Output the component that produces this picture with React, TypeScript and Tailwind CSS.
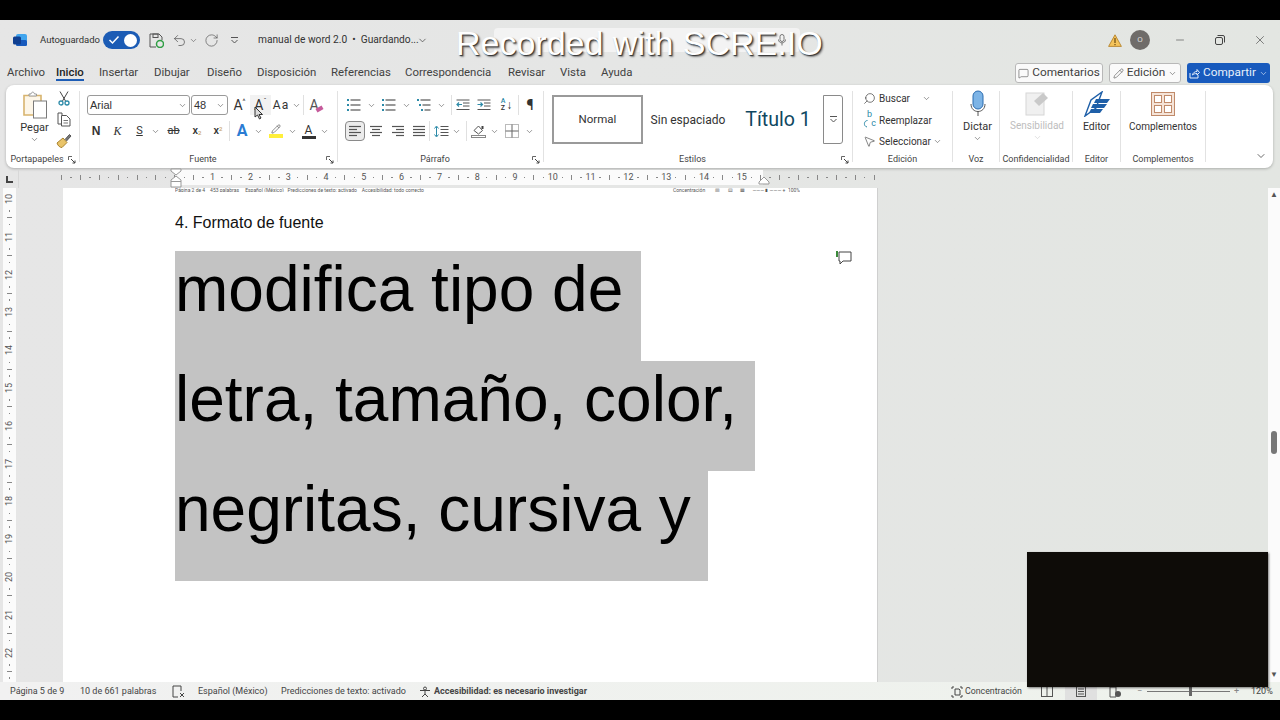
import React from "react";
import { ChevronDown, Undo2, RotateCw, Search, Minus, X, MessageSquare, Pencil, MousePointer2 } from "lucide-react";

const V = ({ c = "text-[#555]", s = 9 }: { c?: string; s?: number }) => <ChevronDown size={s} strokeWidth={1.6} className={`${c} shrink-0`} />;
const TEAL = "#2c8aa8";

function ListIcon({ kind }: { kind: number }) {
  return (
    <svg width="15" height="14" viewBox="0 0 15 14" fill="none">
      {[2, 7, 12].map((y, i) => {
        const x = kind === 2 ? 1 + (i === 1 ? 2 : i === 2 ? 4 : 0) : 1;
        return (
          <g key={y}>
            <rect x={x} y={y - 1} width="2" height="2" fill={TEAL} />
            <line x1={x + 3.5} x2="14.5" y1={y} y2={y} stroke="#555" strokeWidth="1.2" />
          </g>
        );
      })}
    </svg>
  );
}

function Lines({ mode }: { mode: "l" | "c" | "r" | "j" }) {
  const rows = mode === "j" ? [[1, 13], [1, 13], [1, 13], [1, 13]] : mode === "l" ? [[1, 13], [1, 9], [1, 13], [1, 9]] : mode === "c" ? [[1, 13], [3, 11], [1, 13], [3, 11]] : [[1, 13], [5, 13], [1, 13], [5, 13]];
  return (
    <svg width="14" height="12" viewBox="0 0 14 12" fill="none">
      {rows.map((r, i) => <line key={i} x1={r[0]} x2={r[1]} y1={1.5 + i * 3} y2={1.5 + i * 3} stroke="#555" strokeWidth="1.2" />)}
    </svg>
  );
}

function Indent({ inc }: { inc?: boolean }) {
  return (
    <svg width="14" height="12" viewBox="0 0 14 12" fill="none">
      <path d="M0.5 1H13.5M7 4H13.5M7 7H13.5M0.5 10.5H13.5" stroke="#555" />
      {inc ? <path d="M0.5 5.5H5M3.5 3.5L5.5 5.5L3.5 7.5" stroke={TEAL} strokeWidth="1.2" /> : <path d="M6 5.5H1.5M3 3.5L1 5.5L3 7.5" stroke={TEAL} strokeWidth="1.2" />}
    </svg>
  );
}

function Launcher() {
  return (
    <svg width="8" height="8" viewBox="0 0 8 8" fill="none" className="shrink-0">
      <path d="M0.5 4V0.5H4" stroke="#666" />
      <path d="M3 3L7 7M7 4.5V7H4.5" stroke="#444" />
    </svg>
  );
}

function Group({ w, label, children, launcher, sep = true }: { w: string; label: string; children: React.ReactNode; launcher?: boolean; sep?: boolean }) {
  return (
    <div className={`${w} shrink-0 h-full flex`}>
      <div className="flex-1 min-w-0 flex flex-col">
        <div className="flex-1 min-h-0">{children}</div>
        <div className="h-[17px] pt-[1px] flex items-center text-[9px] text-[#444] whitespace-nowrap">
          <span className="flex-1 text-center">{label}</span>
          {launcher && <span className="mr-[3px]"><Launcher /></span>}
        </div>
      </div>
      {sep && <div className="w-px bg-[#e2e2e2] my-[6px]" />}
    </div>
  );
}

const Btn = ({ w, children }: { w: string; children: React.ReactNode }) => (
  <div className={`${w} h-[20px] shrink-0 flex items-center justify-center gap-[3px] text-[#333]`}>{children}</div>
);
const Sep = () => <div className="w-px h-[20px] bg-[#e0e0e0] shrink-0" />;

function RulerCell({ n, tick }: { n?: number; tick?: boolean }) {
  return (
    <div className="w-[37.8px] shrink-0 grid grid-cols-4 text-[9px] leading-none text-[#555]">
      <span className="flex items-center justify-center"><i className="w-[1.5px] h-[1.5px] bg-[#888]" /></span>
      <span className="flex items-center justify-center"><i className="w-px h-[5px] bg-[#888]" /></span>
      <span className="flex items-center justify-center"><i className="w-[1.5px] h-[1.5px] bg-[#888]" /></span>
      <span className="flex items-center justify-center">{tick ? <i className="w-px h-[5px] bg-[#888]" /> : n}</span>
    </div>
  );
}

function VRulerCell({ n }: { n: number }) {
  return (
    <div className="h-[37.8px] w-full shrink-0 flex flex-col items-center justify-between text-[9px] leading-none text-[#555]">
      <span className="[writing-mode:vertical-rl] rotate-180 h-[12px] flex items-center justify-center">{n}</span>
      <i className="w-[1.5px] h-[1.5px] bg-[#888]" />
      <i className="w-[5px] h-px bg-[#888]" />
      <i className="w-[1.5px] h-[1.5px] bg-[#888]" />
      <i className="h-0" />
    </div>
  );
}

export default function App() {
  return (
    <div className="relative w-[1280px] h-[720px] overflow-hidden bg-black font-['Roboto',sans-serif] flex flex-col">
      <div className="h-5 shrink-0 bg-black" />
      <div className="h-[680px] shrink-0 flex flex-col bg-gradient-to-r from-[#e6e6e6] via-[#e5e6e5] to-[#e3e6e2]">
        {/* Title bar */}
        <div className="h-[40px] shrink-0 flex items-center text-[#333]">
          <svg width="14" height="14" viewBox="0 0 14 14" className="ml-[13px] shrink-0">
            <rect x="3" y="1" width="11" height="12" rx="2" fill="#41a5ee" />
            <rect x="3" y="7" width="11" height="6" rx="1.5" fill="#185abd" />
            <rect x="0" y="3.5" width="8" height="8" rx="1.5" fill="#103f91" />
          </svg>
          <span className="ml-[13px] text-[9.5px] w-[57px] whitespace-nowrap">Autoguardado</span>
          <div className="ml-[6px] w-[37px] h-[18px] rounded-full bg-[#1c5cb5] flex items-center justify-between px-[3px] shrink-0">
            <svg width="12" height="10" viewBox="0 0 12 10" fill="none" className="ml-[2px]"><path d="M1.5 5L4.5 8L10.5 1.5" stroke="#fff" strokeWidth="1.5" /></svg>
            <span className="w-[13px] h-[13px] rounded-full bg-white" />
          </div>
          <svg width="15" height="15" viewBox="0 0 15 15" fill="none" className="ml-[9px] shrink-0">
            <path d="M1 1H10L13 4V7M7 14H1V1" stroke="#555" />
            <rect x="4" y="1" width="5" height="3.5" stroke="#555" />
            <circle cx="11" cy="11" r="3.5" stroke="#2f9e44" strokeWidth="1.5" />
          </svg>
          <Undo2 size={15} strokeWidth={1.2} className="ml-[8px] text-[#555] shrink-0" />
          <span className="ml-[2px]"><V /></span>
          <RotateCw size={15} strokeWidth={1.1} className="ml-[6px] text-[#555] shrink-0" />
          <svg width="9" height="9" viewBox="0 0 9 9" fill="none" className="ml-[11px] shrink-0"><path d="M1 1.5H8M1.5 4L4.5 7L7.5 4" stroke="#555" /></svg>
          <span className="ml-[19px] w-[156px] text-[10.2px] whitespace-nowrap">manual de word 2.0 &nbsp;•&nbsp; Guardando...</span>
          <span className="ml-[3px]"><V s={11} c="text-[#444]" /></span>
          <div className="ml-[66px] w-[306px] h-[24px] rounded bg-[#f3f3f3] flex items-center justify-end pr-[14px] shrink-0">
            <svg width="8" height="12" viewBox="0 0 8 12" fill="none"><rect x="2" y="0.5" width="4" height="7" rx="2" stroke="#777" /><path d="M0.5 5.5C0.5 10 7.5 10 7.5 5.5M4 9V11.5" stroke="#777" /></svg>
          </div>
          <svg width="14" height="13" viewBox="0 0 14 13" className="ml-[308px] shrink-0">
            <path d="M7 0.8L13.4 12.4H0.6Z" fill="#f4c35a" stroke="#b07a1e" strokeWidth="0.8" />
            <rect x="6.4" y="4" width="1.2" height="5" fill="#6b4a10" /><rect x="6.4" y="10" width="1.2" height="1.2" fill="#6b4a10" />
          </svg>
          <div className="ml-[8px] w-[20px] h-[20px] rounded-full bg-[#6f6c69] flex items-center justify-center text-[8px] text-[#ddd] shrink-0">O</div>
          <Minus size={12} strokeWidth={1.2} className="ml-[24px] text-[#444] shrink-0" />
          <svg width="10" height="10" viewBox="0 0 10 10" fill="none" className="ml-[29px] shrink-0"><rect x="0.5" y="2.5" width="7" height="7" rx="1.5" stroke="#444" /><path d="M2.5 0.5H8A1.5 1.5 0 0 1 9.5 2V7.5" stroke="#444" /></svg>
          <X size={14} strokeWidth={1.1} className="ml-[28px] text-[#444] shrink-0" />
        </div>
        {/* Tabs */}
        <div className="h-[25px] shrink-0 flex items-center text-[11.4px] text-[#424242] pl-[7px] pt-[1px] whitespace-nowrap">
          <span className="w-[49px]">Archivo</span>
          <span className="w-[43px] h-full relative flex items-center font-medium text-[#222]">
            Inicio<i className="absolute left-0 bottom-[4px] w-[28px] h-[2px] bg-[#1c5cb5]" />
          </span>
          <span className="w-[55px]">Insertar</span>
          <span className="w-[53px]">Dibujar</span>
          <span className="w-[50px]">Diseño</span>
          <span className="w-[74px]">Disposición</span>
          <span className="w-[74px]">Referencias</span>
          <span className="w-[103px]">Correspondencia</span>
          <span className="w-[52px]">Revisar</span>
          <span className="w-[41px]">Vista</span>
          <span className="w-[414px]">Ayuda</span>
          <div className="w-[88px] h-[20px] rounded-[3px] border border-[#b8b8b8] bg-[#fafafa] flex items-center justify-center gap-[3px] shrink-0 text-[11.8px]">
            <MessageSquare size={11} strokeWidth={1.2} /><span>Comentarios</span>
          </div>
          <div className="ml-[6px] w-[72px] h-[20px] rounded-[3px] border border-[#b8b8b8] bg-[#fafafa] flex items-center justify-center gap-[3px] shrink-0 text-[11.8px]">
            <Pencil size={11} strokeWidth={1.2} /><span>Edición</span><V />
          </div>
          <div className="ml-[6px] w-[83px] h-[20px] rounded-[3px] bg-[#185abd] text-[#e8f0fb] flex items-center justify-center gap-[3px] shrink-0 text-[11.8px]">
            <svg width="11" height="11" viewBox="0 0 11 11" fill="none"><path d="M1 5V10H9V7M3.5 7C4 4.5 6 3.5 8 3.5V1.5L10.5 4.5L8 7V5.5C6 5.5 4.5 6 3.5 7Z" stroke="#e8f0fb" /></svg>
            <span>Compartir</span><V c="text-[#e8f0fb]" />
          </div>
        </div>
        {/* Ribbon */}
        <div className="h-[83px] shrink-0 ml-[6px] mr-[7px] bg-white rounded-lg shadow-[0_1px_3px_rgba(0,0,0,0.25)] flex text-[#333]">
          <Group w="w-[74px]" label="Portapapeles" launcher>
            <div className="flex pl-[15px] pt-[6px]">
              <div className="w-[27px] flex flex-col items-center">
                <svg width="26" height="28" viewBox="0 0 26 28" fill="none">
                  <path d="M2 4.5H19V24H2Z" fill="#fdf6e8" stroke="#d8b46e" strokeWidth="1.6" />
                  <path d="M7 5V3H9C9.5 0.5 12 0.5 12.5 3H14.5V5Z" fill="#fff" stroke="#999" />
                  <rect x="11.5" y="10" width="13" height="17" fill="#fff" stroke="#7a7a7a" />
                </svg>
                <span className="text-[11px] mt-[2px] leading-[14px]">Pegar</span>
                <V />
              </div>
              <div className="ml-[8px] flex flex-col items-center gap-[6px]">
                <svg width="12" height="15" viewBox="0 0 12 15" fill="none">
                  <path d="M2 0.5L7.5 10M10 0.5L4.5 10" stroke="#444" />
                  <circle cx="3" cy="12" r="2" stroke={TEAL} strokeWidth="1.3" /><circle cx="9" cy="12" r="2" stroke={TEAL} strokeWidth="1.3" />
                </svg>
                <svg width="14" height="15" viewBox="0 0 14 15" fill="none">
                  <path d="M5 3V1H1V12H4" stroke="#555" />
                  <path d="M4.5 3.5H9.5L13 7V14H4.5Z" fill="#fff" stroke="#555" />
                  <path d="M6.5 8.5H11M6.5 11H11" stroke="#777" />
                </svg>
                <svg width="16" height="15" viewBox="0 0 16 15" fill="none">
                  <path d="M1 10L7 5L11 9.5L6 14.5C4 14.5 2 13 1 10Z" fill="#e9c46a" stroke="#a9822c" />
                  <path d="M9 6.5L13.5 1.5L15 3L10.5 8" fill="#777" stroke="#555" />
                </svg>
              </div>
            </div>
          </Group>
          <Group w="w-[258px]" label="Fuente" launcher>
            <div className="pl-[7px] pt-[10px] flex items-center">
              <div className="w-[103px] h-[20px] rounded-[3px] border border-[#9a9a9a] flex items-center justify-between px-[2px] text-[11px] font-['Liberation_Sans',sans-serif]">Arial<V /></div>
              <div className="ml-[1px] w-[37px] h-[20px] rounded-[3px] border border-[#9a9a9a] flex items-center justify-between px-[2px] text-[11px] font-['Liberation_Sans',sans-serif]">48<V /></div>
              <Btn w="w-[21px] ml-[1px]"><span className="text-[14px]">A</span><span className="text-[7px] -ml-[3px] -mt-[6px]">^</span></Btn>
              <Btn w="w-[21px] bg-[#f2f2f2]"><span className="text-[14px]">A</span><span className="text-[7px] -ml-[3px] -mt-[6px]">ˇ</span></Btn>
              <Btn w="w-[32px]"><span className="text-[12px] tracking-[1px]">Aa</span><V /></Btn>
              <Sep />
              <Btn w="w-[24px]">
                <span className="text-[14px] text-[#555]">A</span><i className="w-[7px] h-[4px] -ml-[6px] mt-[8px] rotate-[-30deg] bg-[#c55a9b]" />
              </Btn>
            </div>
            <div className="pl-[5px] pt-[6px] flex items-center text-[11px]">
              <Btn w="w-[22px]"><b className="text-[12px] font-['Liberation_Sans',sans-serif]">N</b></Btn>
              <Btn w="w-[21px]"><i className="font-['Liberation_Serif',serif] text-[12px]">K</i></Btn>
              <Btn w="w-[23px]"><u className="text-[11px]">S</u></Btn>
              <V />
              <Btn w="w-[27px]"><s className="text-[11px]">ab</s></Btn>
              <Btn w="w-[20px]"><span className="font-medium">x<sub className="text-[6px] text-[#c9a468]">2</sub></span></Btn>
              <Btn w="w-[22px]"><span className="font-medium">x<sup className="text-[6px] text-[#c9a468]">2</sup></span></Btn>
              <Sep />
              <Btn w="w-[24px]"><span className="text-[16px] font-bold text-[#2b7cd3] leading-none">A</span></Btn>
              <V />
              <Btn w="w-[25px]">
                <span className="flex flex-col items-center leading-none"><Pencil size={10} strokeWidth={1.3} /><i className="w-[14px] h-[4px] bg-[#ffef3a]" /></span>
              </Btn>
              <V />
              <Btn w="w-[23px]">
                <span className="flex flex-col items-center leading-none text-[12px]">A<i className="w-[14px] h-[3px] bg-[#333]" /></span>
              </Btn>
              <V />
            </div>
          </Group>
          <Group w="w-[206px]" label="Párrafo" launcher>
            <div className="pl-[8px] pt-[10px] flex items-center">
              <Btn w="w-[15px]"><ListIcon kind={0} /></Btn><span className="mx-[5.5px]"><V /></span>
              <Btn w="w-[15px]"><ListIcon kind={1} /></Btn><span className="mx-[5.5px]"><V /></span>
              <Btn w="w-[15px]"><ListIcon kind={2} /></Btn><span className="mx-[5.5px]"><V /></span>
              <Sep />
              <Btn w="w-[21px]"><Indent /></Btn>
              <Btn w="w-[22px]"><Indent inc /></Btn>
              <Btn w="w-[23px]">
                <span className="flex flex-col text-[7px] leading-[7px] font-medium"><span className="text-[#2c8aa8]">A</span><span>Z</span></span>
                <span className="text-[12px] -ml-[2px]">↓</span>
              </Btn>
              <Sep />
              <Btn w="w-[22px]"><span className="text-[14px] font-bold">¶</span></Btn>
            </div>
            <div className="pl-[7px] pt-[6px] flex items-center">
              <div className="w-[20px] h-[20px] rounded-[4px] border border-[#8a8a8a] bg-[#ececec] flex items-center justify-center shrink-0"><Lines mode="l" /></div>
              <Btn w="w-[22px]"><Lines mode="c" /></Btn>
              <Btn w="w-[21px]"><Lines mode="r" /></Btn>
              <Btn w="w-[21px]"><Lines mode="j" /></Btn>
              <Sep />
              <Btn w="w-[22px]">
                <svg width="15" height="13" viewBox="0 0 15 13" fill="none">
                  <path d="M2.5 2V11M0.5 3.5L2.5 1L4.5 3.5M0.5 9.5L2.5 12L4.5 9.5" stroke={TEAL} />
                  <path d="M6.5 1.5H14.5M6.5 4.5H14.5M6.5 7.5H14.5M6.5 10.5H14.5" stroke="#555" />
                </svg>
              </Btn>
              <V />
              <span className="ml-[5px]"><Sep /></span>
              <Btn w="w-[23px]">
                <svg width="15" height="14" viewBox="0 0 15 14" fill="none">
                  <path d="M3 6.5L7.5 2L11.5 6.5L7.5 10Z" stroke="#555" fill="#fff" />
                  <path d="M11.5 2V5" stroke="#444" strokeWidth="2" />
                  <rect x="0.5" y="11.5" width="14" height="2" fill="#fff" stroke="#888" />
                </svg>
              </Btn>
              <V />
              <Btn w="w-[26px]">
                <svg width="14" height="14" viewBox="0 0 14 14" fill="none"><rect x="0.5" y="0.5" width="13" height="13" stroke="#bbb" /><path d="M7 0.5V13.5M0.5 7H13.5" stroke="#666" /></svg>
              </Btn>
              <V />
            </div>
          </Group>
          <Group w="w-[309px]" label="Estilos" launcher>
            <div className="ml-[8px] mt-[10px] w-[291px] h-[49px] flex items-stretch">
              <div className="w-[91px] border-2 border-[#9a9a9a] flex items-center justify-center text-[11.5px]">Normal</div>
              <div className="w-[90px] flex items-center justify-center text-[12px] whitespace-nowrap">Sin espaciado</div>
              <div className="w-[90px] flex items-center justify-center text-[19.6px] text-[#0f4761] whitespace-nowrap">Título 1</div>
              <div className="w-[20px] rounded-r-[3px] border border-[#8a8a8a] flex items-center justify-center">
                <svg width="9" height="9" viewBox="0 0 9 9" fill="none"><path d="M1 1.5H8M1.5 4L4.5 7L7.5 4" stroke="#555" /></svg>
              </div>
            </div>
          </Group>
          <Group w="w-[100px]" label="Edición">
            <div className="pt-[3px] pl-[10px] flex flex-col text-[10px]">
              <div className="h-[21px] flex items-center gap-[2px]"><Search size={13} strokeWidth={1.2} className="-scale-x-100 shrink-0" /><span className="w-[41px] ml-[1px]">Buscar</span><V /></div>
              <div className="h-[22px] flex items-center gap-[2px]">
                <span className="w-[14px] h-[16px] flex items-end text-[9px] leading-none text-[#2c8aa8]">
                  <svg width="5" height="8" viewBox="0 0 5 8" fill="none" className="shrink-0"><path d="M4.5 0.5C1 0.5 0 6 4 7" stroke="#2c8aa8" /></svg>
                  <span className="flex flex-col items-end -ml-[1px]"><span className="mr-[4px]">b</span><span>c</span></span>
                </span>
                <span>Reemplazar</span>
              </div>
              <div className="h-[21px] flex items-center gap-[2px]"><MousePointer2 size={13} strokeWidth={1.1} className="shrink-0 mr-[1px]" /><span>Seleccionar</span><V /></div>
            </div>
          </Group>
          <Group w="w-[47px]" label="Voz">
            <div className="pt-[5px] pl-[3px] flex flex-col items-center">
              <svg width="16" height="27" viewBox="0 0 16 27" fill="none">
                <rect x="3" y="1" width="10" height="18" rx="5" fill="#7db4e6" stroke="#2b6cb0" />
                <path d="M1 14C1 24 15 24 15 14M8 22V26" stroke="#555" />
              </svg>
              <span className="text-[11px] leading-[14px] mt-[3px]">Dictar</span>
              <V />
            </div>
          </Group>
          <Group w="w-[73px]" label="Confidencialidad">
            <div className="pt-[6px] pl-[2px] flex flex-col items-center">
              <svg width="24" height="25" viewBox="0 0 24 25" fill="none">
                <rect x="1" y="2" width="18" height="22" fill="#f0f0f0" stroke="#d6d6d6" />
                <path d="M9 10L18 2L23 7L14 15Z" fill="#c9c9c9" />
              </svg>
              <span className="text-[10px] leading-[14px] mt-[3px] text-[#bdbdbd]">Sensibilidad</span>
              <V c="text-[#ccc]" />
            </div>
          </Group>
          <Group w="w-[48px]" label="Editor">
            <div className="pt-[6px] flex flex-col items-center">
              <svg width="28" height="26" viewBox="0 0 28 26" fill="none">
                <path d="M2 25L8 9L19 1L13 17Z" fill="#fff" stroke="#1e5fa8" strokeWidth="1.4" />
                <path d="M13 8H27L24 12H11ZM10 13H24L21 17H8ZM8 18H20L17 22H6Z" fill="#1e5fa8" />
              </svg>
              <span className="text-[10.5px] leading-[14px] mt-[3px]">Editor</span>
            </div>
          </Group>
          <Group w="w-[85px]" label="Complementos">
            <div className="pt-[7px] flex flex-col items-center">
              <div className="w-[24px] h-[24px] border border-[#c08a6a] bg-[#f5e4d8] grid grid-cols-2 gap-[2px] p-[2px]">
                <i className="border border-[#c08a6a] bg-white" /><i className="border border-[#c08a6a] bg-white" />
                <i className="border border-[#c08a6a] bg-white" /><i className="border border-[#c08a6a] bg-white" />
              </div>
              <span className="text-[10px] leading-[14px] mt-[4px]">Complementos</span>
            </div>
          </Group>
          <div className="flex-1 flex items-end justify-end pr-[6px] pb-[6px]"><V s={12} c="text-[#444]" /></div>
        </div>
        {/* Ruler */}
        <div className="h-[20px] shrink-0 pt-[2px] flex relative">
          <div className="w-[19px] shrink-0 flex items-center justify-center border-r border-[#d8d8d8]">
            <svg width="7" height="7" viewBox="0 0 7 7"><path d="M1 0V6H7" stroke="#444" strokeWidth="2" fill="none" /></svg>
          </div>
          <div className="w-[47.2px] shrink-0 h-[15px] flex items-center justify-end pr-[4.6px]"><i className="w-px h-[5px] bg-[#888]" /></div>
          <div className="h-[15px] flex">
            <div className="w-[108.8px] overflow-hidden flex shrink-0">
              <RulerCell tick /><RulerCell tick /><RulerCell tick />
            </div>
            <div className="w-[588px] shrink-0 overflow-hidden bg-[#fbfbfb] flex pl-[4.6px]">
              {Array.from({ length: 15 }, (_, i) => <RulerCell key={i} n={i + 1} />)}
              <RulerCell tick />
            </div>
            <div className="w-[112px] shrink-0 overflow-hidden flex">
              <div className="flex shrink-0 -ml-[16.4px]"><RulerCell tick /><RulerCell tick /><RulerCell tick /><RulerCell tick /></div>
            </div>
          </div>
          <svg width="12" height="20" viewBox="0 0 12 20" fill="none" className="absolute left-[170px] top-0">
            <path d="M1 1H11V3L6 7L1 3Z" fill="#fff" stroke="#999" />
            <path d="M6 8L11 12V19H1V12Z" fill="#fff" stroke="#999" />
            <path d="M1 13.5H11" stroke="#999" />
          </svg>
          <svg width="12" height="9" viewBox="0 0 12 9" fill="none" className="absolute left-[758px] top-[8px]">
            <path d="M6 1L11 6V8H1V6Z" fill="#fff" stroke="#999" />
          </svg>
        </div>
        {/* Body */}
        <div className="flex-1 min-h-0 flex">
          <div className="w-[13px] shrink-0 ml-[3px] bg-[#fbfbfb] overflow-hidden flex flex-col pt-[5px]">
            {Array.from({ length: 13 }, (_, i) => <VRulerCell key={i} n={i + 10} />)}
          </div>
          <div className="w-[47px] shrink-0" />
          <div className="w-[815px] shrink-0 bg-white border-r border-[#cfcfcf] relative overflow-hidden pl-[112px]">
            <div className="h-[4px] w-[625px] overflow-hidden flex justify-between text-[5px] leading-[4px] text-[#555] whitespace-nowrap">
              <span>Página 2 de 4 &nbsp;&nbsp; 453 palabras &nbsp;&nbsp;&nbsp; Español (México) &nbsp; Predicciones de texto: activado &nbsp;&nbsp; Accesibilidad: todo correcto</span>
              <span>Concentración &nbsp;&nbsp;&nbsp;&nbsp;&nbsp;&nbsp; ▥ &nbsp;&nbsp;&nbsp;&nbsp; ▤ &nbsp;&nbsp;&nbsp;&nbsp; ▦ &nbsp;&nbsp;&nbsp;&nbsp; ——— ▮ ——— + &nbsp;100%</span>
            </div>
            <div className="h-[21px] mt-[20px] text-[16px] leading-[21px] text-[#111] font-['Liberation_Sans',sans-serif]">4. Formato de fuente</div>
            <div className="mt-[18px] font-['Liberation_Sans',sans-serif] text-[64px] leading-[76px] text-black whitespace-nowrap">
              <div className="w-[466px] h-[110px] bg-[#c3c3c3]">modifica tipo de</div>
              <div className="w-[580px] h-[110px] bg-[#c3c3c3]">letra, tamaño, color,</div>
              <div className="w-[533px] h-[110px] bg-[#c3c3c3]">negritas, cursiva y</div>
            </div>
            <svg width="16" height="15" viewBox="0 0 16 15" fill="none" className="absolute left-[773px] top-[62px]">
              <path d="M3 2H15V11H7L4 14V11H3Z" stroke="#444" fill="#fff" />
              <path d="M1 1V7" stroke="#3a8a3a" strokeWidth="2" />
            </svg>
          </div>
          <div className="flex-1" />
          <div className="w-[12px] shrink-0 bg-[#fbfbfb] flex flex-col items-center py-[3px]">
            <span className="text-[8px] leading-none text-[#555]">▲</span>
            <i className="w-[6px] h-[23px] rounded-full bg-[#777] mt-[232px]" />
            <span className="mt-auto text-[8px] leading-none text-[#555]">▼</span>
          </div>
        </div>
        {/* Status */}
        <div className="h-[18px] shrink-0 bg-gradient-to-r from-[#f1f1f1] to-[#eef2ec] flex items-center text-[9px] text-[#444] whitespace-nowrap pl-[10px] pt-[1px]">
          <span className="w-[70px]">Página 5 de 9</span>
          <span className="w-[92px]">10 de 661 palabras</span>
          <svg width="13" height="13" viewBox="0 0 13 13" fill="none" className="shrink-0"><path d="M1 1H9V6M1 1V12H6M8 8L12 12M12 8L8 12" stroke="#444" /></svg>
          <span className="ml-[13px] w-[83px]">Español (México)</span>
          <span className="w-[138px]">Predicciones de texto: activado</span>
          <svg width="12" height="12" viewBox="0 0 12 12" fill="none" className="shrink-0"><circle cx="6" cy="2.5" r="1.5" stroke="#444" /><path d="M1 4.5H11M6 5V8M6 8L3 11M6 8L9 11" stroke="#444" /></svg>
          <b className="ml-[3px] w-[517px] font-bold">Accesibilidad: es necesario investigar</b>
          <svg width="12" height="12" viewBox="0 0 12 12" fill="none" className="shrink-0"><path d="M4 3H8L9 4V9H4Z M1 3V1H3M9 1H11V3M1 9V11H3M9 11H11V9" stroke="#444" /></svg>
          <span className="ml-[2px] w-[76px] text-[8.8px]">Concentración</span>
          <svg width="12" height="11" viewBox="0 0 12 11" fill="none" className="shrink-0"><rect x="0.5" y="0.5" width="11" height="10" stroke="#555" /><path d="M6 0.5V10.5" stroke="#555" /></svg>
          <span className="w-[12px]" />
          <span className="w-[32px] h-full bg-[#e0e0e0] flex items-center justify-center">
            <svg width="10" height="11" viewBox="0 0 10 11" fill="none"><rect x="0.5" y="0.5" width="9" height="10" stroke="#555" /><path d="M2 3H8M2 5.5H8M2 8H8" stroke="#555" /></svg>
          </span>
          <svg width="14" height="12" viewBox="0 0 14 12" fill="none" className="ml-[12px] shrink-0"><path d="M1 1H7V11H1Z" stroke="#555" /><circle cx="9" cy="8" r="3" fill="#555" /></svg>
          <span className="ml-[14px] text-[#888] w-[10px]">−</span>
          <span className="w-[83px] h-px bg-[#777] relative"><i className="absolute left-[42px] -top-[4px] w-[3px] h-[9px] bg-[#666]" /></span>
          <span className="ml-[4px] text-[#888] w-[15px]">+</span>
          <span className="ml-[2px]">120%</span>
        </div>
      </div>
      {/* Cursor, watermark and webcam overlays */}
      <svg width="10" height="14" viewBox="0 0 10 14" className="absolute left-[254px] top-[106px]"><path d="M1 1V11L3.5 9L5.5 13L7 12L5 8.5H8.5Z" fill="#ddd" stroke="#333" /></svg>
      <div className="absolute left-[456px] top-[23px] text-[34px] leading-[40px] text-white font-['Liberation_Sans',sans-serif] whitespace-nowrap [text-shadow:1px_1px_1px_#333,2px_2px_2px_#888]">Recorded with SCRE.IO</div>
      <div className="absolute left-[1027px] top-[552px] w-[241px] h-[135px] bg-[#0e0c08] shadow-[1px_1px_2px_rgba(0,0,0,0.5)]" />
    </div>
  );
}
